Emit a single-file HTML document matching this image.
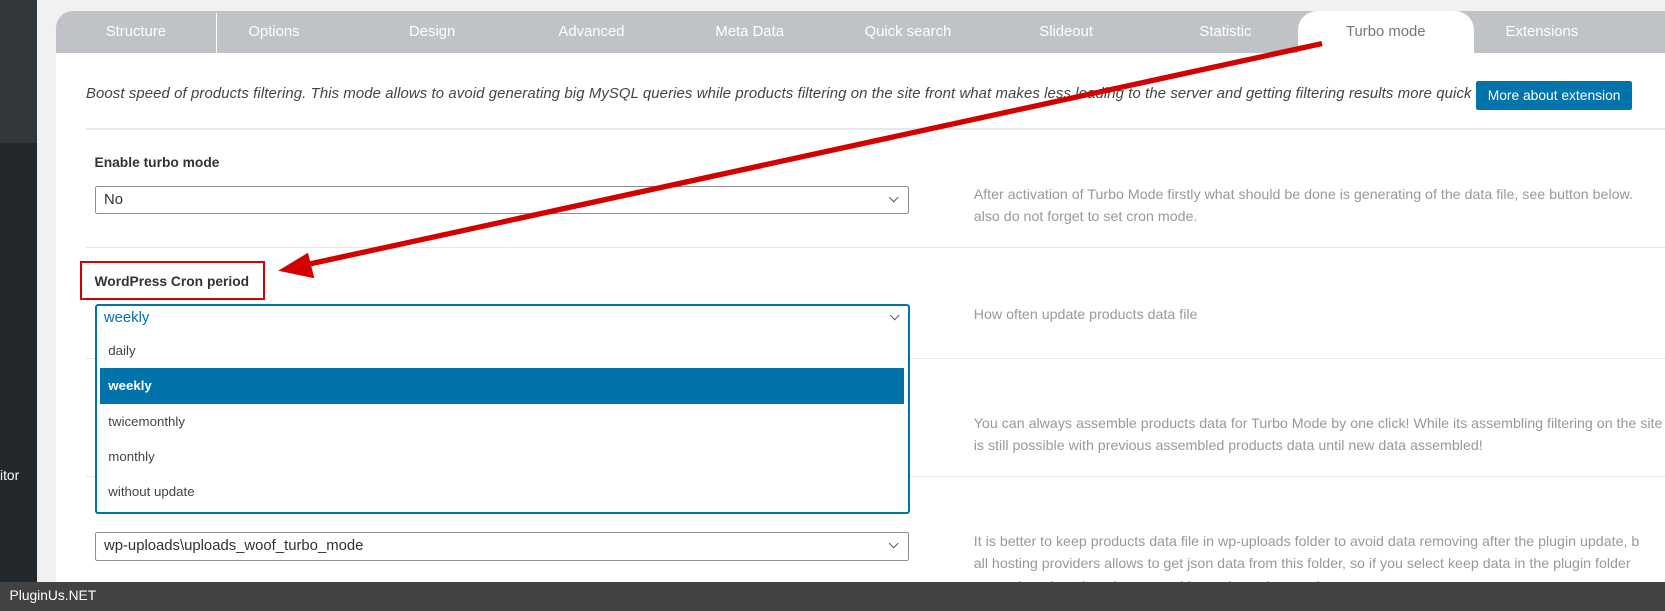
<!DOCTYPE html>
<html><head><meta charset="utf-8"><style>
html{zoom:1.0619}
body{margin:0;width:1568px;height:575px;overflow:hidden;background:#f1f1f1;font-family:"Liberation Sans",sans-serif;position:relative}
.a{position:absolute}
.tab{position:absolute;top:10px;height:40px;background:#bfc3c8;color:#fff;font-size:14px;line-height:40px;text-align:center;border-radius:16px 16px 0 0}
.sel{position:absolute;left:89px;width:765px;height:25px;border:1px solid #8c8f94;border-radius:2px;background:#fff;font-size:14px;line-height:25px;color:#2c3338;text-indent:8px}
.chev{position:absolute;right:10px;top:7px;width:6px;height:6px;border-right:1.5px solid #50575e;border-bottom:1.5px solid #50575e;transform:rotate(45deg)}
.hint{position:absolute;left:917px;font-size:13.4px;color:#999;line-height:21px;white-space:nowrap}
.line{position:absolute;left:81px;right:0;height:1px;background:#e2e8ee}
.lbl{position:absolute;left:89px;font-size:13px;font-weight:bold;color:#333}
.opt{position:absolute;left:94px;width:757px;height:33px;line-height:33px;font-size:12.5px;color:#444;text-indent:8px}
</style></head><body>
<div class="a" style="left:0;top:0;width:35px;height:135px;background:#32373c"></div>
<div class="a" style="left:0;top:135px;width:35px;height:440px;background:#23282d"></div>
<div class="a" style="left:0;top:441px;color:#fff;font-size:13px">itor</div>
<div class="a" style="left:53px;top:50px;right:0;height:498px;background:#fff"></div>
<div class="tab" style="left:53px;width:1515px;border-radius:18px 0 0 0"></div>
<div class="tab" style="left:53px;width:150px">Structure</div>
<div class="a" style="left:203px;top:12px;width:1px;height:38px;background:#fff"></div>
<div class="tab" style="left:183px;width:150px;background:transparent">Options</div>
<div class="tab" style="left:332px;width:150px;background:transparent">Design</div>
<div class="tab" style="left:482px;width:150px;background:transparent">Advanced</div>
<div class="tab" style="left:631px;width:150px;background:transparent">Meta Data</div>
<div class="tab" style="left:780px;width:150px;background:transparent">Quick search</div>
<div class="tab" style="left:929px;width:150px;background:transparent">Slideout</div>
<div class="tab" style="left:1079px;width:150px;background:transparent">Statistic</div>
<div class="tab" style="left:1222px;width:166px;background:#fff;color:#777;border-radius:18px 18px 0 0">Turbo mode</div>
<div class="tab" style="left:1377px;width:150px;background:transparent">Extensions</div>
<div class="a" style="left:81px;top:81px;font-size:14px;font-style:italic;color:#444;white-space:nowrap;letter-spacing:0.11px">Boost speed of products filtering. This mode allows to avoid generating big MySQL queries while products filtering on the site front what makes less loading to the server and getting filtering results more quick</div>
<div class="a" style="left:1390px;top:76px;width:147px;height:28px;background:#0073aa;color:#fff;font-size:13px;line-height:28px;text-align:center;border-radius:2px">More about extension</div>
<div class="line" style="top:121px"></div>
<div class="lbl" style="top:146px">Enable turbo mode</div>
<div class="sel" style="top:175px">No<div class="chev"></div></div>
<div class="hint" style="top:173px">After activation of Turbo Mode firstly what should be done is generating of the data file, see button below. <br>also do not forget to set cron mode.</div>
<div class="line" style="top:233px"></div>
<div class="a" style="left:75px;top:246px;width:171px;height:33px;border:2px solid #d40000"></div>
<div class="lbl" style="top:258px">WordPress Cron period</div>
<div class="hint" style="top:286px">How often update products data file</div>
<div class="line" style="top:337px"></div>
<div class="hint" style="top:389px">You can always assemble products data for Turbo Mode by one click! While its assembling filtering on the site<br>is still possible with previous assembled products data until new data assembled!</div>
<div class="line" style="top:448px"></div>
<div class="sel" style="top:501px">wp-uploads\uploads_woof_turbo_mode<div class="chev"></div></div>
<div class="hint" style="top:500px">It is better to keep products data file in wp-uploads folder to avoid data removing after the plugin update, b<br>all hosting providers allows to get json data from this folder, so if you select keep data in the plugin folder<br>remember about it and re-assemble products data again</div>
<div class="a" style="left:89px;top:286px;width:764px;height:194px;border:2px solid #0073aa;border-radius:3px;background:#fff">
 <div class="a" style="left:7px;top:4px;font-size:14px;color:#0073aa">weekly</div>
 <div class="chev" style="top:6px;right:9px"></div>
</div>
<div class="opt" style="top:314px">daily</div>
<div class="opt" style="top:347px;background:#0073aa;color:#fff;font-weight:bold">weekly</div>
<div class="opt" style="top:380px">twicemonthly</div>
<div class="opt" style="top:413px">monthly</div>
<div class="opt" style="top:446px">without update</div>
<svg class="a" style="left:0;top:0" width="1568" height="575">
<line x1="1245" y1="41" x2="285" y2="250" stroke="#d40000" stroke-width="5"/>
<polygon points="262,255 290,238 296,262" fill="#d40000"/>
</svg>
<div class="a" style="left:0;top:548px;width:1568px;height:27px;background:#424242;color:#fff;font-size:13px;line-height:26px;text-indent:9px">PluginUs.NET</div>
</body></html>
